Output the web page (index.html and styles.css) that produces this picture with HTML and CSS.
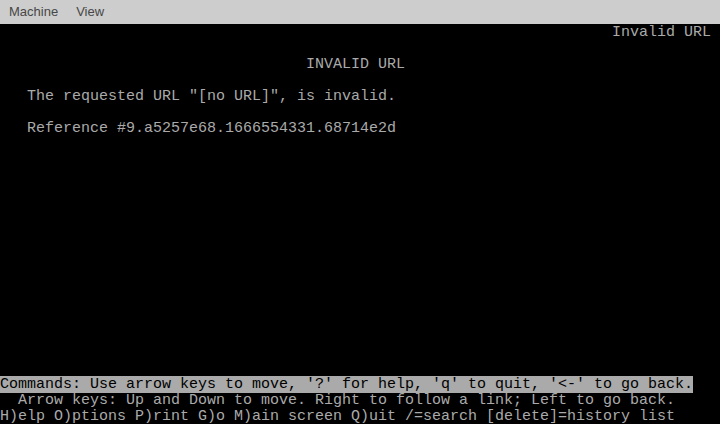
FILE: index.html
```html
<!DOCTYPE html>
<html>
<head>
<meta charset="utf-8">
<link rel="stylesheet" href="styles.css">
</head>
<body>
<div class="menubar">
  <span class="menu-item">Machine</span>
  <span class="menu-item">View</span>
</div>
<pre class="screen">                                                                    Invalid URL

                                  INVALID URL

   The requested URL "[no URL]", is invalid.

   Reference #9.a5257e68.1666554331.68714e2d















<span class="hl">Commands: Use arrow keys to move, '?' for help, 'q' to quit, '&lt;-' to go back.</span>
  Arrow keys: Up and Down to move. Right to follow a link; Left to go back.
H)elp O)ptions P)rint G)o M)ain screen Q)uit /=search [delete]=history list</pre>
</body>
</html>
```
FILE: styles.css
```css
html, body {
  margin: 0;
  padding: 0;
  background: #000;
  width: 720px;
  height: 424px;
  overflow: hidden;
}
.menubar {
  height: 24px;
  background: #cdcdcd;
  display: flex;
  font-family: "Liberation Sans", Arial, sans-serif;
  font-size: 13px;
  line-height: 24px;
  color: #474747;
}
.menu-item {
  padding: 0 9px;
}
.screen {
  margin: 0;
  padding: 1px 0 0 0;
  height: 399px;
  background: #000;
  color: #aaaaaa;
  font-family: "Liberation Mono", "Courier New", monospace;
  font-size: 15px;
  line-height: 16px;
  white-space: pre;
}
.hl {
  background: #aaaaaa;
  color: #000;
}
```
